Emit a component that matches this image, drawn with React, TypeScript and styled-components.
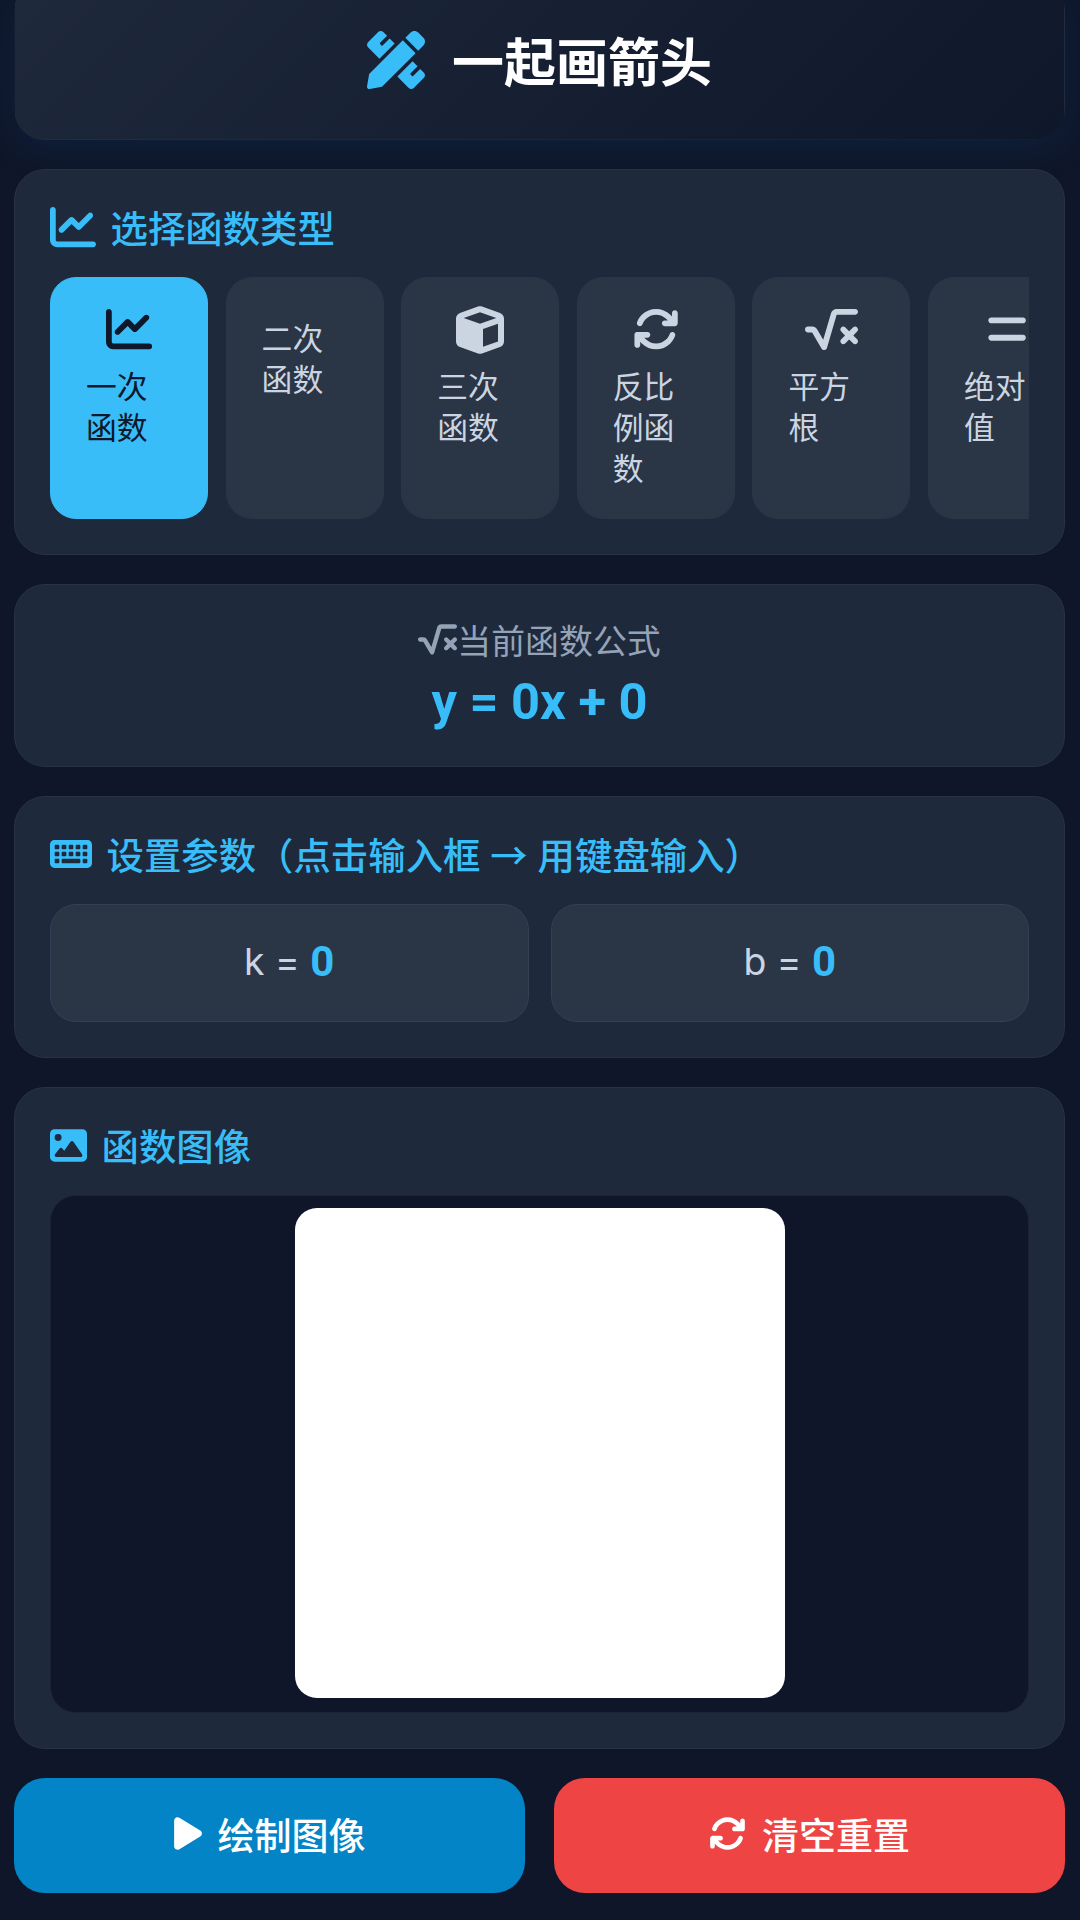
import React from "react";
import styled, { createGlobalStyle } from "styled-components";
import { FaPencilRuler } from "react-icons/fa";
import {
  FaArrowsRotate,
  FaChartLine,
  FaCube,
  FaEquals,
  FaImage,
  FaKeyboard,
  FaPlay,
  FaSquareRootVariable,
} from "react-icons/fa6";

const GlobalStyle = createGlobalStyle`
  html, body {
    margin: 0;
    padding: 0;
    background: #0f1629;
    overflow: hidden;
  }
  * {
    box-sizing: border-box;
  }
  body {
    font-family: Inter, "Noto Sans CJK SC", "Noto Sans", sans-serif;
  }
`;

const Page = styled.main`
  display: flex;
  flex-direction: column;
  gap: 29px;
  width: 1080px;
  height: 1920px;
  padding: 0 15px 0 14px;
  overflow: hidden;
`;

const Header = styled.header`
  display: flex;
  flex: 0 0 160px;
  align-items: center;
  justify-content: center;
  gap: 27px;
  margin-top: -20px;
  color: #ffffff;
  background: linear-gradient(135deg, #1e293b, #0f172a);
  border: 1px solid rgba(255, 255, 255, 0.02);
  border-radius: 31px;
  box-shadow: 0 8px 40px rgba(14, 90, 160, 0.16);
`;

const HeaderIcon = styled(FaPencilRuler)`
  color: #38bdf8;
  font-size: 58px;
`;

const Heading = styled.h1`
  margin: 0;
  font-family: "Noto Sans CJK SC", sans-serif;
  font-size: 52px;
  font-weight: 700;
  line-height: 70px;
`;

const Card = styled.section`
  padding: 35px;
  background: #1e293b;
  border: 1px solid #263346;
  border-radius: 31px;
`;

const FormulaCard = styled(Card)`
  display: flex;
  flex-direction: column;
  align-items: center;
  height: 183px;
  padding: 30px 35px 0;
`;

const SectionTitle = styled.h2`
  display: flex;
  align-items: center;
  gap: 14.5px;
  height: 44px;
  margin: 0 0 28px;
  color: #38bdf8;
  font-family: "Noto Sans CJK SC", sans-serif;
  font-size: 37.4px;
  font-weight: 500;
  line-height: 44px;
  white-space: nowrap;
  word-spacing: 1.5px;
`;

const TabRow = styled.div`
  display: flex;
  gap: 17.6px;
  overflow: hidden;
`;

const Tab = styled.button<{ $active?: boolean; $bare?: boolean }>`
  display: flex;
  flex: 0 0 158px;
  flex-direction: column;
  align-items: center;
  gap: 11px;
  height: 242px;
  padding: ${(p) => (p.$bare ? "38px" : "28px")} 35px 0;
  color: ${(p) => (p.$active ? "#0f172a" : "#cbd5e1")};
  background: ${(p) => (p.$active ? "#38bdf8" : "#2a3546")};
  border: 1px solid ${(p) => (p.$active ? "#38bdf8" : "#2a3546")};
  border-radius: 26px;
  font-family: "Noto Sans CJK SC", sans-serif;
`;

const TabIcon = styled.span`
  display: flex;
  flex: 0 0 47px;
  align-items: center;
  justify-content: center;
  min-height: 0;
  font-size: 46.2px;
`;

const TabLabel = styled.span`
  width: 100%;
  font-size: 30.8px;
  line-height: 41px;
  text-align: left;
`;

const FormulaLabel = styled.div`
  display: flex;
  align-items: center;
  height: 48px;
  color: #94a3b8;
  font-family: "Noto Sans CJK SC", sans-serif;
  font-size: 33.9px;
  svg {
    font-size: 39px;
  }
`;

const FormulaValue = styled.div`
  margin-top: 6px;
  color: #38bdf8;
  font-family: Roboto, sans-serif;
  font-size: 50.6px;
  font-weight: 700;
  line-height: 66px;
  white-space: nowrap;
`;

const ParamGrid = styled.div`
  display: grid;
  grid-template-columns: 1fr 1fr;
  gap: 22px;
`;

const ParamBox = styled.div`
  display: flex;
  align-items: center;
  justify-content: center;
  gap: 0.28em;
  height: 118px;
  padding-bottom: 4px;
  color: #cbd5e1;
  background: #2a3546;
  border: 1px solid #334155;
  border-radius: 26px;
  font-family: Inter, sans-serif;
  font-size: 37.4px;
  font-weight: 400;
`;

const ParamValue = styled.strong`
  color: #38bdf8;
  font-family: Roboto, sans-serif;
  font-size: 42px;
  font-weight: 700;
`;

const CanvasWrap = styled.div`
  display: flex;
  justify-content: center;
  height: 518px;
  padding: 12px;
  background: #0f1629;
  border: 1px solid #1a2436;
  border-radius: 26px;
`;

const Canvas = styled.div`
  width: 490px;
  height: 490px;
  background: #ffffff;
  border-radius: 22px;
`;

const Actions = styled.div`
  display: grid;
  grid-template-columns: 1fr 1fr;
  gap: 29px;
`;

const ActionButton = styled.button<{ $danger?: boolean }>`
  display: flex;
  align-items: center;
  justify-content: center;
  gap: 16px;
  height: 115px;
  padding: 0 0 4px;
  color: #ffffff;
  background: ${(p) => (p.$danger ? "#ef4444" : "#0284c7")};
  border: 0;
  border-radius: 31px;
  font-family: "Noto Sans CJK SC", sans-serif;
  font-size: 37px;
  font-weight: 500;
`;

const PlayIcon = styled(FaPlay)`
  width: 28px;
  height: 37px;
`;

const tabs = [
  { label: "一次函数", icon: <FaChartLine />, active: true },
  { label: "二次函数" },
  { label: "三次函数", icon: <FaCube size={48} /> },
  { label: "反比例函数", icon: <FaArrowsRotate /> },
  { label: "平方根", icon: <FaSquareRootVariable size={53} /> },
  { label: "绝对值", icon: <FaEquals /> },
];

export default function App() {
  return (
    <>
      <GlobalStyle />
      <Page>
        <Header>
          <HeaderIcon />
          <Heading>一起画箭头</Heading>
        </Header>

        <Card>
          <SectionTitle>
            <FaChartLine size={46} />
            选择函数类型
          </SectionTitle>
          <TabRow>
            {tabs.map((t) => (
              <Tab key={t.label} $active={t.active} $bare={!t.icon}>
                {t.icon && <TabIcon>{t.icon}</TabIcon>}
                <TabLabel>{t.label}</TabLabel>
              </Tab>
            ))}
          </TabRow>
        </Card>

        <FormulaCard>
          <FormulaLabel>
            <FaSquareRootVariable />
            当前函数公式
          </FormulaLabel>
          <FormulaValue>y = 0x + 0</FormulaValue>
        </FormulaCard>

        <Card>
          <SectionTitle>
            <FaKeyboard size={42} />
            设置参数（点击输入框 → 用键盘输入）
          </SectionTitle>
          <ParamGrid>
            <ParamBox>
              k = <ParamValue>0</ParamValue>
            </ParamBox>
            <ParamBox>
              b = <ParamValue>0</ParamValue>
            </ParamBox>
          </ParamGrid>
        </Card>

        <Card>
          <SectionTitle>
            <FaImage size={37} />
            函数图像
          </SectionTitle>
          <CanvasWrap>
            <Canvas />
          </CanvasWrap>
        </Card>

        <Actions>
          <ActionButton>
            <PlayIcon />
            绘制图像
          </ActionButton>
          <ActionButton $danger>
            <FaArrowsRotate />
            清空重置
          </ActionButton>
        </Actions>
      </Page>
    </>
  );
}
